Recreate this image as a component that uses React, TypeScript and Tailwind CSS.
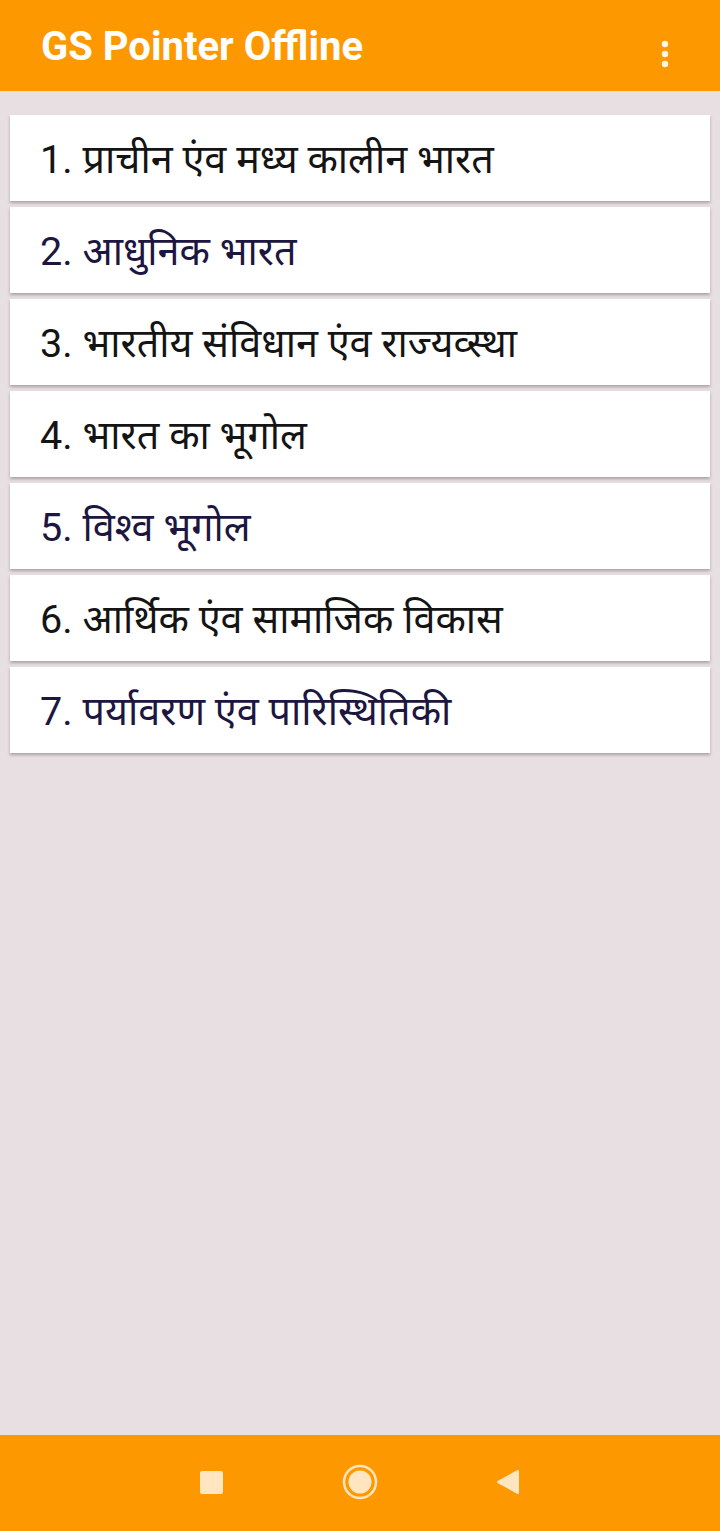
import React from "react";

const items: { t: string; navy: boolean }[] = [
  { t: "1. प्राचीन एंव मध्य कालीन भारत", navy: false },
  { t: "2. आधुनिक भारत", navy: true },
  { t: "3. भारतीय संविधान एंव राज्यव्स्था", navy: false },
  { t: "4. भारत का भूगोल", navy: false },
  { t: "5. विश्व भूगोल", navy: true },
  { t: "6. आर्थिक एंव सामाजिक विकास", navy: false },
  { t: "7. पर्यावरण एंव पारिस्थितिकी", navy: true },
];

export default function App() {
  return (
    <div className="w-[720px] h-[1531px] flex flex-col bg-[#e8dfe2]" style={{ fontFamily: 'Roboto, "Noto Sans", sans-serif' }}>
      <div className="h-[91px] bg-[#fe9800] flex items-center justify-between pl-[41px] pr-[50px] shrink-0">
        <span className="text-white text-[40px] font-bold tracking-[0px] leading-none pt-[2px]">GS Pointer Offline</span>
        <svg width="10" height="30" viewBox="0 0 10 30" className="mt-[18px]">
          <circle cx="5" cy="4" r="3.2" fill="#fff7e6" />
          <circle cx="5" cy="14" r="3.2" fill="#fff7e6" />
          <circle cx="5" cy="24" r="3.2" fill="#fff7e6" />
        </svg>
      </div>
      <div className="flex-1 flex flex-col gap-[6px] px-[10px] pt-[24px]">
        {items.map((it, i) => (
          <div key={i} className="h-[86px] bg-white shadow-[0_2px_3px_rgba(0,0,0,0.28)] flex items-center pl-[30px] pt-[4px]">
            <span className={`text-[39.6px] leading-none ${it.navy ? "text-[#1c1640]" : "text-[#141414]"}`}>{it.t}</span>
          </div>
        ))}
      </div>
      <div className="h-[96px] bg-[#fe9800] flex items-center justify-center shrink-0 pb-[2px]">
        <div className="w-[23px] h-[23px] bg-[#ffe5c0] rounded-[2px] mr-[119px]" />
        <svg width="36" height="36" viewBox="0 0 36 36">
          <circle cx="18" cy="18" r="16" fill="none" stroke="#ffe5c0" strokeWidth="2.5" />
          <circle cx="18" cy="18" r="11.5" fill="#ffe5c0" />
        </svg>
        <svg width="24" height="26" viewBox="0 0 24 26" className="ml-[118px]">
          <path d="M22 2 L22 24 L2 13 Z" fill="#ffe5c0" stroke="#ffe5c0" strokeWidth="2" strokeLinejoin="round" />
        </svg>
      </div>
    </div>
  );
}
